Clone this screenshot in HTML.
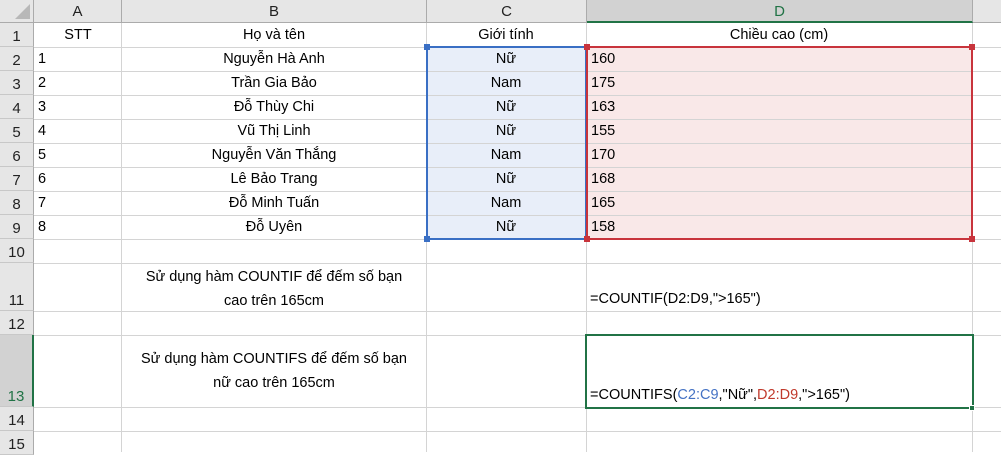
<!DOCTYPE html><html><head><meta charset="utf-8"><style>
*{margin:0;padding:0;box-sizing:border-box}
body{width:1001px;height:452px;overflow:hidden;background:#fff;font-family:"Liberation Sans",Arial,sans-serif;font-size:14.5px;color:#000;position:relative}
.a{position:absolute}
.hl{position:absolute;height:1px;background:#d4d4d4}
.vl{position:absolute;width:1px;background:#d4d4d4}
.t{position:absolute;white-space:nowrap;line-height:22px}
.c{text-align:center}
.rh{position:absolute;left:0;width:34px;text-align:center;font-size:15px;background:#e6e6e6;border-right:1px solid #ababab;border-bottom:1px solid #c8c8c8;display:flex;align-items:flex-end;justify-content:center;padding-bottom:1px;color:#222}
.ch{position:absolute;top:0;height:23px;background:#e6e6e6;border-right:1px solid #ababab;border-bottom:1px solid #ababab;text-align:center;line-height:23px;font-size:15px;color:#222}
</style></head><body>
<!-- fills -->
<div class="a" style="left:426px;top:47px;width:160px;height:192px;background:#e8eef9"></div>
<div class="a" style="left:586px;top:47px;width:386px;height:192px;background:#f9e8e8"></div>
<!-- gridlines -->
<div class="vl" style="left:121px;top:23px;height:429px"></div>
<div class="vl" style="left:426px;top:23px;height:429px"></div>
<div class="vl" style="left:586px;top:23px;height:429px"></div>
<div class="vl" style="left:972px;top:23px;height:429px"></div>
<div class="hl" style="left:34px;top:47px;width:967px"></div>
<div class="hl" style="left:34px;top:71px;width:967px"></div>
<div class="hl" style="left:34px;top:95px;width:967px"></div>
<div class="hl" style="left:34px;top:119px;width:967px"></div>
<div class="hl" style="left:34px;top:143px;width:967px"></div>
<div class="hl" style="left:34px;top:167px;width:967px"></div>
<div class="hl" style="left:34px;top:191px;width:967px"></div>
<div class="hl" style="left:34px;top:215px;width:967px"></div>
<div class="hl" style="left:34px;top:239px;width:967px"></div>
<div class="hl" style="left:34px;top:263px;width:967px"></div>
<div class="hl" style="left:34px;top:311px;width:967px"></div>
<div class="hl" style="left:34px;top:335px;width:967px"></div>
<div class="hl" style="left:34px;top:407px;width:967px"></div>
<div class="hl" style="left:34px;top:431px;width:967px"></div>
<!-- column headers -->
<div class="ch" style="left:0;width:34px;border-right:1px solid #ababab"><svg width="34" height="23" style="position:absolute;left:0;top:0"><polygon points="30,4 30,19 15,19" fill="#b8b8b8"/></svg></div>
<div class="ch" style="left:34px;width:88px">A</div>
<div class="ch" style="left:122px;width:305px">B</div>
<div class="ch" style="left:427px;width:160px">C</div>
<div class="ch" style="left:587px;width:386px;background:#d2d2d2;color:#217346;border-bottom:2px solid #217346">D</div>
<div class="ch" style="left:973px;width:28px;border-right:none"></div>
<!-- row headers -->
<div class="rh" style="top:23px;height:24px">1</div>
<div class="rh" style="top:47px;height:24px">2</div>
<div class="rh" style="top:71px;height:24px">3</div>
<div class="rh" style="top:95px;height:24px">4</div>
<div class="rh" style="top:119px;height:24px">5</div>
<div class="rh" style="top:143px;height:24px">6</div>
<div class="rh" style="top:167px;height:24px">7</div>
<div class="rh" style="top:191px;height:24px">8</div>
<div class="rh" style="top:215px;height:24px">9</div>
<div class="rh" style="top:239px;height:24px">10</div>
<div class="rh" style="top:263px;height:48px">11</div>
<div class="rh" style="top:311px;height:24px">12</div>
<div class="rh" style="top:335px;height:72px;background:#d2d2d2;color:#217346;border-right:2px solid #217346">13</div>
<div class="rh" style="top:407px;height:24px">14</div>
<div class="rh" style="top:431px;height:24px">15</div>
<!-- row 1 -->
<div class="t c" style="left:34px;width:88px;top:24px">STT</div>
<div class="t c" style="left:122px;width:304px;top:24px">Họ và tên</div>
<div class="t c" style="left:426px;width:160px;top:24px">Giới tính</div>
<div class="t c" style="left:586px;width:386px;top:24px">Chiều cao (cm)</div>
<!-- data -->
<div class="t" style="left:38px;top:48px">1</div><div class="t c" style="left:122px;width:304px;top:48px">Nguyễn Hà Anh</div><div class="t c" style="left:426px;width:160px;top:48px">Nữ</div><div class="t" style="left:591px;top:48px">160</div>
<div class="t" style="left:38px;top:72px">2</div><div class="t c" style="left:122px;width:304px;top:72px">Trần Gia Bảo</div><div class="t c" style="left:426px;width:160px;top:72px">Nam</div><div class="t" style="left:591px;top:72px">175</div>
<div class="t" style="left:38px;top:96px">3</div><div class="t c" style="left:122px;width:304px;top:96px">Đỗ Thùy Chi</div><div class="t c" style="left:426px;width:160px;top:96px">Nữ</div><div class="t" style="left:591px;top:96px">163</div>
<div class="t" style="left:38px;top:120px">4</div><div class="t c" style="left:122px;width:304px;top:120px">Vũ Thị Linh</div><div class="t c" style="left:426px;width:160px;top:120px">Nữ</div><div class="t" style="left:591px;top:120px">155</div>
<div class="t" style="left:38px;top:144px">5</div><div class="t c" style="left:122px;width:304px;top:144px">Nguyễn Văn Thắng</div><div class="t c" style="left:426px;width:160px;top:144px">Nam</div><div class="t" style="left:591px;top:144px">170</div>
<div class="t" style="left:38px;top:168px">6</div><div class="t c" style="left:122px;width:304px;top:168px">Lê Bảo Trang</div><div class="t c" style="left:426px;width:160px;top:168px">Nữ</div><div class="t" style="left:591px;top:168px">168</div>
<div class="t" style="left:38px;top:192px">7</div><div class="t c" style="left:122px;width:304px;top:192px">Đỗ Minh Tuấn</div><div class="t c" style="left:426px;width:160px;top:192px">Nam</div><div class="t" style="left:591px;top:192px">165</div>
<div class="t" style="left:38px;top:216px">8</div><div class="t c" style="left:122px;width:304px;top:216px">Đỗ Uyên</div><div class="t c" style="left:426px;width:160px;top:216px">Nữ</div><div class="t" style="left:591px;top:216px">158</div>
<!-- row 11 -->
<div class="t c" style="left:122px;width:304px;top:265px;line-height:24px">Sử dụng hàm COUNTIF để đếm số bạn<br>cao trên 165cm</div>
<div class="t" style="left:590px;top:288px">=COUNTIF(D2:D9,"&gt;165")</div>
<!-- row 13 -->
<div class="t c" style="left:122px;width:304px;top:347px;line-height:24px">Sử dụng hàm COUNTIFS để đếm số bạn<br>nữ cao trên 165cm</div>
<div class="t" style="left:590px;top:384px">=COUNTIFS(<span style="color:#4472c4">C2:C9</span>,"Nữ",<span style="color:#c0392b">D2:D9</span>,"&gt;165")</div>
<!-- selection borders -->
<div class="a" style="left:426px;top:46px;width:161px;height:194px;border:2px solid #3a6fc4"></div>
<div class="a" style="left:586px;top:46px;width:387px;height:194px;border:2px solid #c8343c"></div>
<div class="a" style="left:424px;top:44px;width:6px;height:6px;background:#3a6fc4"></div>
<div class="a" style="left:424px;top:236px;width:6px;height:6px;background:#3a6fc4"></div>
<div class="a" style="left:584px;top:44px;width:6px;height:6px;background:#c8343c"></div>
<div class="a" style="left:969px;top:44px;width:6px;height:6px;background:#c8343c"></div>
<div class="a" style="left:584px;top:236px;width:6px;height:6px;background:#c8343c"></div>
<div class="a" style="left:969px;top:236px;width:6px;height:6px;background:#c8343c"></div>
<div class="a" style="left:585px;top:334px;width:389px;height:75px;border:2px solid #217346"></div>
<div class="a" style="left:969px;top:405px;width:6px;height:6px;background:#217346;border:1px solid #fff"></div>
</body></html>
